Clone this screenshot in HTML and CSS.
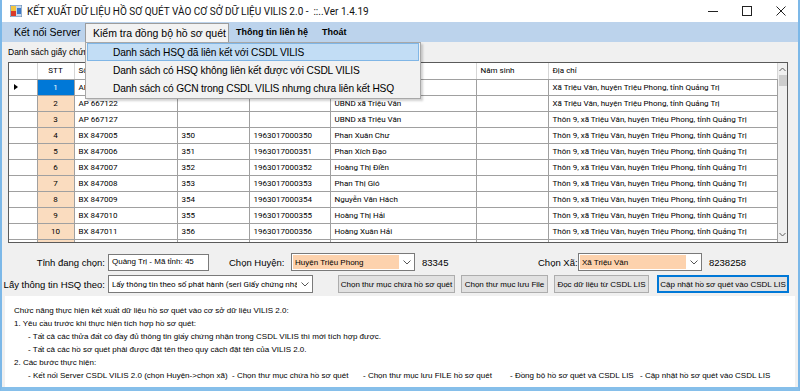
FILE: index.html
```html
<!DOCTYPE html>
<html lang="vi">
<head>
  <meta charset="UTF-8" />
  <title>Kết xuất dữ liệu hồ sơ quét vào CSDL VILIS 2.0</title>
  <link rel="stylesheet" href="styles.css">
</head>
<body>
  <div class="window">
    <div class="titlebar">
      <svg class="app-icon" width="12" height="12" viewBox="0 0 12 12">
        <rect x="0" y="0" width="12" height="12" fill="#c9d9ec" stroke="#5f86b3" stroke-width="1"/>
        <rect x="1" y="1" width="5" height="5" fill="#f3c53d"/>
        <rect x="1" y="6" width="5" height="5" fill="#d93b2b"/>
        <rect x="7" y="3" width="4" height="6" fill="#3d7ac8"/>
      </svg>
      <span class="title">KẾT XUẤT DỮ LIỆU HỒ SƠ QUÉT VÀO CƠ SỞ DỮ LIỆU VILIS 2.0 -&nbsp; ::..Ver 1.4.19</span>
      <div class="controls">
        <span class="ctl"><svg width="10" height="10" viewBox="0 0 10 10"><line x1="0" y1="5.5" x2="10" y2="5.5" stroke="#222" stroke-width="1"/></svg></span>
        <span class="ctl"><svg width="10" height="10" viewBox="0 0 10 10"><rect x="0.5" y="0.5" width="9" height="9" fill="none" stroke="#222" stroke-width="1"/></svg></span>
        <span class="ctl"><svg width="10" height="10" viewBox="0 0 10 10"><path d="M0.5 0.5 L9.5 9.5 M9.5 0.5 L0.5 9.5" stroke="#222" stroke-width="1"/></svg></span>
      </div>
    </div>

    <div class="menubar">
      <span class="menu-item first">Kết nối Server</span>
      <span class="menu-item open">Kiểm tra đồng bộ hồ sơ quét
        <div class="dropdown">
          <div class="drop-item active">Danh sách HSQ đã liên kết với CSDL VILIS</div>
          <div class="drop-item">Danh sách có HSQ không liên kết được với CSDL VILIS</div>
          <div class="drop-item">Danh sách có GCN trong CSDL VILIS nhưng chưa liên kết HSQ</div>
        </div>
      </span>
      <span class="menu-item small">Thông tin liên hệ</span>
      <span class="menu-item small">Thoát</span>
    </div>

    <div class="content">
      <div class="caption">Danh sách giấy chứng nhận</div>

      <div class="grid">
        <table class="data">
          <thead>
            <tr>
              <th class="rh w-rh"></th><th class="c w-stt">STT</th><th class="w-seri">Số phát hành</th><th class="w-so">Số vào sổ</th>
              <th class="w-ma">Mã GCN</th><th class="w-ten">Họ tên</th><th class="w-nam">Năm sinh</th><th class="w-dc">Địa chỉ</th>
            </tr>
          </thead>
          <tbody>
            <tr><td class="rh"><span class="arrow"></span></td><td class="stt sel">1</td><td>AP 667121</td><td></td><td></td><td>UBND xã Triệu Vân</td><td></td><td>Xã Triệu Vân, huyện Triệu Phong, tỉnh Quảng Trị</td></tr>
            <tr><td class="rh"></td><td class="stt">2</td><td>AP 667122</td><td></td><td></td><td>UBND xã Triệu Vân</td><td></td><td>Xã Triệu Vân, huyện Triệu Phong, tỉnh Quảng Trị</td></tr>
            <tr><td class="rh"></td><td class="stt">3</td><td>AP 667127</td><td></td><td></td><td>UBND xã Triệu Vân</td><td></td><td>Thôn 9, xã Triệu Vân, huyện Triệu Phong, tỉnh Quảng Trị</td></tr>
            <tr><td class="rh"></td><td class="stt">4</td><td>BX 847005</td><td>350</td><td>1963017000350</td><td>Phan Xuân Chư</td><td></td><td>Thôn 9, xã Triệu Vân, huyện Triệu Phong, tỉnh Quảng Trị</td></tr>
            <tr><td class="rh"></td><td class="stt">5</td><td>BX 847006</td><td>351</td><td>1963017000351</td><td>Phan Xích Đạo</td><td></td><td>Thôn 9, xã Triệu Vân, huyện Triệu Phong, tỉnh Quảng Trị</td></tr>
            <tr><td class="rh"></td><td class="stt">6</td><td>BX 847007</td><td>352</td><td>1963017000352</td><td>Hoàng Thị Điền</td><td></td><td>Thôn 9, xã Triệu Vân, huyện Triệu Phong, tỉnh Quảng Trị</td></tr>
            <tr><td class="rh"></td><td class="stt">7</td><td>BX 847008</td><td>353</td><td>1963017000353</td><td>Phan Thị Gió</td><td></td><td>Thôn 9, xã Triệu Vân, huyện Triệu Phong, tỉnh Quảng Trị</td></tr>
            <tr><td class="rh"></td><td class="stt">8</td><td>BX 847009</td><td>354</td><td>1963017000354</td><td>Nguyễn Văn Hách</td><td></td><td>Thôn 9, xã Triệu Vân, huyện Triệu Phong, tỉnh Quảng Trị</td></tr>
            <tr><td class="rh"></td><td class="stt">9</td><td>BX 847010</td><td>355</td><td>1963017000355</td><td>Hoàng Thị Hải</td><td></td><td>Thôn 9, xã Triệu Vân, huyện Triệu Phong, tỉnh Quảng Trị</td></tr>
            <tr><td class="rh"></td><td class="stt">10</td><td>BX 847011</td><td>356</td><td>1963017000356</td><td>Hoàng Xuân Hải</td><td></td><td>Thôn 9, xã Triệu Vân, huyện Triệu Phong, tỉnh Quảng Trị</td></tr>
            <tr><td class="rh"></td><td class="stt">11</td><td>BX 847012</td><td>357</td><td>1963017000357</td><td>Lê Văn Hiền</td><td></td><td>Thôn 9, xã Triệu Vân, huyện Triệu Phong, tỉnh Quảng Trị</td></tr>
          </tbody>
        </table>
        <div class="vscroll">
          <svg class="sb-arrow" width="7" height="5" viewBox="0 0 7 5"><path d="M0.5 4 L3.5 1 L6.5 4" fill="none" stroke="#606060" stroke-width="1"/></svg>
          <div class="sb-thumb"></div>
          <div class="sb-track"></div>
          <svg class="sb-arrow" width="7" height="5" viewBox="0 0 7 5"><path d="M0.5 1 L3.5 4 L6.5 1" fill="none" stroke="#606060" stroke-width="1"/></svg>
        </div>
      </div>

      <div class="filters">
        <div class="frow">
          <label class="flabel">Tỉnh đang chọn:</label>
          <div class="textbox w-tinh">Quảng Trị - Mã tỉnh: 45</div>
          <label class="flabel-huyen">Chọn Huyện:</label>
          <div class="combo peach w-huyen"><span class="combo-text">Huyện Triệu Phong</span><span class="combo-arrow"><svg width="8" height="5" viewBox="0 0 8 5"><path d="M0.5 0.5 L4 4 L7.5 0.5" fill="none" stroke="#555" stroke-width="1"/></svg></span></div>
          <span class="code code-huyen">83345</span>
          <label class="flabel-xa">Chọn Xã:</label>
          <div class="combo peach w-xa"><span class="combo-text">Xã Triệu Vân</span><span class="combo-arrow"><svg width="8" height="5" viewBox="0 0 8 5"><path d="M0.5 0.5 L4 4 L7.5 0.5" fill="none" stroke="#555" stroke-width="1"/></svg></span></div>
          <span class="code">8238258</span>
        </div>
        <div class="frow">
          <label class="flabel">Lấy thông tin HSQ theo:</label>
          <div class="combo w-theo"><span class="combo-text">Lấy thông tin theo số phát hành (seri Giấy chứng nhận)</span><span class="combo-arrow"><svg width="8" height="5" viewBox="0 0 8 5"><path d="M0.5 0.5 L4 4 L7.5 0.5" fill="none" stroke="#555" stroke-width="1"/></svg></span></div>
          <button class="btn b1">Chọn thư mục chứa hồ sơ quét</button>
          <button class="btn b2">Chọn thư mục lưu File</button>
          <button class="btn b3">Đọc dữ liệu từ CSDL LIS</button>
          <button class="btn b4 focus">Cập nhật hồ sơ quét vào CSDL LIS</button>
        </div>
      </div>

      <div class="notes">
        <p>Chức năng thực hiện kết xuất dữ liệu hồ sơ quét vào cơ sở dữ liệu VILIS 2.0:</p>
        <p>1. Yêu cầu trước khi thực hiện tích hợp hồ sơ quét:</p>
        <p class="sub">- Tất cả các thửa đất có đầy đủ thông tin giấy chứng nhận trong CSDL VILIS thì mới tích hợp được.</p>
        <p class="sub">- Tất cả các hồ sơ quét phải được đặt tên theo quy cách đặt tên của VILIS 2.0.</p>
        <p>2. Các bước thực hiện:</p>
        <div class="steps">
          <span>- Kết nối Server CSDL VILIS 2.0 (chọn Huyện-&gt;chọn xã)</span>
          <span>- Chọn thư mục chứa hồ sơ quét</span>
          <span>- Chọn thư mục lưu FILE hồ sơ quét</span>
          <span>- Đồng bộ hồ sơ quét và CSDL LIS</span>
          <span>- Cập nhật hồ sơ quét vào CSDL LIS</span>
        </div>
      </div>
    </div>
  </div>
</body>
</html>
```

FILE: styles.css
```css
* {
  margin: 0; padding: 0; box-sizing: border-box;
}

body {
  width: 800px;
  height: 391px;
  overflow: hidden;
  font-family: "Liberation Sans", Arial, sans-serif;
  color: #000;
  background: #f0f0f0;
}

.window {
  width: 800px;
  height: 391px;
  border-left: 2px solid #7cb8e8;
  border-right: 2px solid #7cb8e8;
  border-bottom: 4px solid #86bfea;
  background: #f0f0f0;
  display: flex;
  flex-direction: column;
}

/* title bar */
.titlebar {
  height: 22px;
  flex: none;
  background: #ffffff;
  display: flex;
  align-items: center;
  padding-left: 8px;
}

.app-icon {
  margin-right: 5px;
}

.title {
  font-family: Roboto, "Liberation Sans", sans-serif;
  font-size: 10px;
  color: #111;
  flex: 1;
}

.controls {
  display: flex;
  height: 22px;
}

.ctl {
  width: 34px;
  display: flex;
  align-items: center;
  justify-content: center;
}

/* menu */
.menubar {
  height: 20px;
  flex: none;
  background: #bcd3ec;
  display: flex;
  align-items: stretch;
  padding-left: 4px;
  font-size: 10.5px;
  white-space: nowrap;
}

.menu-item {
  display: flex;
  align-items: center;
  padding: 0 6px;
  position: relative;
}

.menu-item.first {
  width: 79px;
  padding-left: 8px;
}

.menu-item.open {
  width: 144px;
  margin-top: 1px;
  padding-left: 7px;
  background: #f2f2f2;
  border: 1px solid #9c9c9c;
  border-bottom: none;
}

.menu-item.small {
  font-size: 9px;
  font-weight: bold;
  padding: 0 7px;
}

.dropdown {
  position: absolute;
  left: -1px;
  top: 18px;
  width: 336px;
  background: #f2f2f2;
  border: 1px solid #a8a8a8;
  box-shadow: 2px 2px 2px rgba(0, 0, 0, 0.18);
  padding: 0 1px 1px 1px;
  font-size: 10.2px;
  letter-spacing: -0.15px;
  z-index: 5;
}

.drop-item {
  height: 18px;
  display: flex;
  align-items: center;
  padding-left: 25px;
  border: 1px solid transparent;
}

.drop-item.active {
  background: #c2ddf5;
  border-color: #80b6e6;
}

/* content */
.content {
  flex: 1;
  display: flex;
  flex-direction: column;
}

.caption {
  height: 20px;
  flex: none;
  padding: 5px 0 0 6px;
  font-size: 8.5px;
}

.grid {
  margin-left: 6px;
  width: 780px;
  height: 181px;
  flex: none;
  border: 1px solid #5a5a5a;
  background: #ffffff;
  display: flex;
  overflow: hidden;
}

.data {
  width: 768px;
  flex: none;
  border-collapse: collapse;
  table-layout: fixed;
  font-family: Roboto, "Liberation Sans", sans-serif;
  font-size: 8px;
  align-self: flex-start;
}

.data tr {
  height: 16px;
}

.data th, .data td {
  border: 1px solid #a0a0a0;
  padding: 0 4px;
  text-align: left;
  font-weight: normal;
  white-space: nowrap;
  overflow: hidden;
}

.data thead th {
  border-top: none;
  border-color: #d6d6d6;
  border-bottom-color: #a0a0a0;
}

.data tr > :first-child {
  border-left: none;
}

.w-rh { width: 28px; }
.w-stt { width: 37px; }
.w-seri { width: 103px; }
.w-so { width: 72px; }
.w-ma { width: 81px; }
.w-ten { width: 146px; }
.w-nam { width: 72px; }
.w-dc { width: 229px; }

.data .rh {
  background: #ffffff;
  padding: 0;
}

.data .c {
  text-align: center;
}

.data .stt {
  background: #fadcbf;
  text-align: center;
}

.data .stt.sel {
  background: #0078d7;
  color: #ffffff;
}

.arrow {
  display: block;
  margin-left: 5px;
  width: 0;
  height: 0;
  border-top: 3px solid transparent;
  border-bottom: 3px solid transparent;
  border-left: 4px solid #000;
}

.vscroll {
  width: 10px;
  flex: none;
  background: #f0f0f0;
  display: flex;
  flex-direction: column;
  align-items: center;
  padding: 4px 0 5px;
}

.sb-thumb {
  width: 8px;
  height: 11px;
  margin-top: 3px;
  background: #cdcdcd;
}

.sb-track {
  flex: 1;
}

/* filters */
.filters {
  height: 53px;
  flex: none;
  padding-top: 10px;
  font-size: 9.5px;
}

.frow {
  display: flex;
  align-items: center;
  height: 18px;
  margin-bottom: 4px;
}

.flabel {
  width: 103px;
  text-align: right;
  margin-right: 3px;
}

.textbox {
  height: 17px;
  background: #ffffff;
  border: 1px solid #7a7a7a;
  padding: 2px 0 0 3px;
  font-size: 8px;
}

.w-tinh { width: 101px; }

.flabel-huyen {
  margin-left: 20px;
  width: 62px;
}

.flabel-xa {
  width: 40px;
}

.combo {
  height: 18px;
  display: flex;
  background: #ffffff;
  border: 1px solid #7a7a7a;
  font-size: 8px;
}

.combo-text {
  flex: 1;
  display: flex;
  align-items: center;
  padding-left: 2px;
  margin: 1px 0 1px 1px;
  white-space: nowrap;
  overflow: hidden;
}

.combo.peach .combo-text {
  background: #fdd2ad;
}

.combo-arrow {
  width: 15px;
  display: flex;
  align-items: center;
  justify-content: center;
}

.w-huyen { width: 124px; }
.w-xa { width: 124px; }
.w-theo { width: 205px; }

.w-theo .combo-text {
  font-family: Roboto, "Liberation Sans", sans-serif;
}

.code {
  margin-left: 7px;
}

.code-huyen {
  width: 116px;
}

.btn {
  height: 18px;
  background: #e1e1e1;
  border: 1px solid #adadad;
  font-family: "Liberation Sans", Arial, sans-serif;
  font-size: 8px;
  color: #000;
  margin-left: 6px;
  white-space: nowrap;
  padding: 0;
}

.b1 { width: 117px; margin-left: 25px; }
.b2 { width: 87px; }
.b3 { width: 95px; }
.b4 { width: 132px; margin-left: 8px; }

.btn.focus {
  border: 2px solid #0078d7;
}

/* notes */
.notes {
  margin: 0 3px 0 3px;
  flex: 1;
  background: #ffffff;
  padding: 8px 0 0 9px;
  font-size: 8px;
  line-height: 13px;
}

.notes .sub {
  padding-left: 14px;
}

.steps {
  display: grid;
  grid-template-columns: 204px 131px 147px 130px auto;
  padding-left: 14px;
  white-space: nowrap;
}
```
